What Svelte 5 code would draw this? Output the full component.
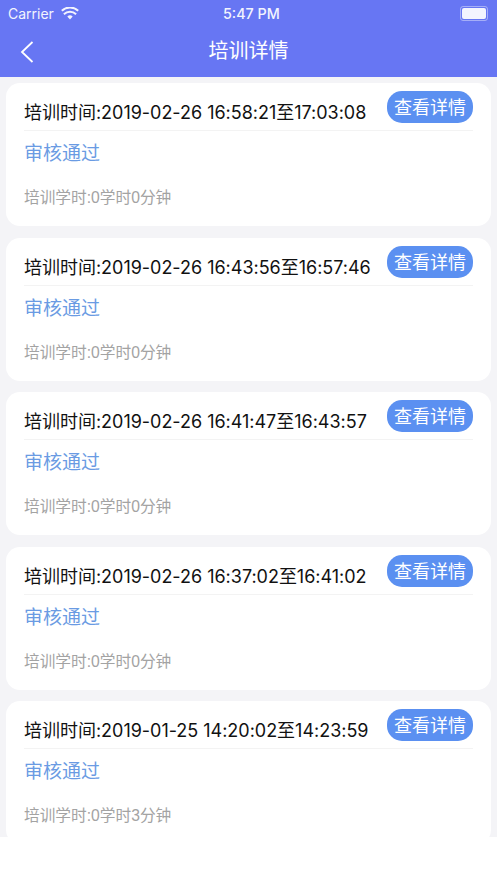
<script lang="ts">
	type Record = { range: string; hours: string };

	const records: Record[] = [
		{ range: '2019-02-26 16:58:21至17:03:08', hours: '0学时0分钟' },
		{ range: '2019-02-26 16:43:56至16:57:46', hours: '0学时0分钟' },
		{ range: '2019-02-26 16:41:47至16:43:57', hours: '0学时0分钟' },
		{ range: '2019-02-26 16:37:02至16:41:02', hours: '0学时0分钟' },
		{ range: '2019-01-25 14:20:02至14:23:59', hours: '0学时3分钟' }
	];
</script>

<div class="screen">
	<header class="top">
		<div class="status">
			<div class="status-left">
				<span>Carrier</span>
				<svg width="18" height="13" viewBox="0 0 18 13">
					<path d="M9 12.6 L6.3 9.6 A3.9 3.9 0 0 1 11.7 9.6 Z" fill="#fff" />
					<path d="M2.9 6.2 A8.8 8.8 0 0 1 15.100 6.200" fill="none" stroke="#fff" stroke-width="2" transform="translate(0 1)" />
					<path d="M0.800 3.800 A11.800 11.800 0 0 1 17.200 3.800" fill="none" stroke="#fff" stroke-width="2" />
				</svg>
			</div>
			<span class="clock">5:47 PM</span>
			<div class="battery"><i></i></div>
		</div>
		<div class="nav">
			<svg class="back" width="16" height="24" viewBox="0 0 16 24">
				<path d="M13.500 2 L3 12 L13.500 22" fill="none" stroke="#fff" stroke-width="1.800" />
			</svg>
			<h1>培训详情</h1>
		</div>
	</header>

	<main class="list">
		{#each records as item}
			<section class="card">
				<div class="head">
					<span class="range">培训时间:{item.range}</span>
					<button type="button">查看详情</button>
				</div>
				<div class="state">审核通过</div>
				<div class="hours">培训学时:{item.hours}</div>
			</section>
		{/each}
	</main>
</div>

<style>
	:global(body) {
		margin: 0;
		background: #fff;
	}

	.screen {
		width: 497px;
		height: 883px;
		overflow: hidden;
		font-family: "Liberation Sans", "Noto Sans CJK SC", sans-serif;
		background: #fff;
	}

	.top {
		height: 77px;
		background: #6776f3;
		color: #fff;
	}

	.status {
		height: 26px;
		padding: 0 8px;
		display: flex;
		align-items: center;
		justify-content: space-between;
		position: relative;
		font-family: Inter, "Liberation Sans", sans-serif;
		font-size: 14px;
		opacity: 0.92;
	}

	.status-left {
		display: flex;
		align-items: center;
		gap: 7px;
	}

	.clock {
		position: absolute;
		left: 223px;
		font-size: 14.300px;
		font-weight: 500;
	}

	.battery {
		width: 24px;
		height: 11px;
		margin-right: 1px;
		padding: 1px;
		border: 1px solid rgba(255, 255, 255, 0.45);
		border-radius: 3px;
		box-sizing: content-box;
		display: flex;
	}

	.battery i {
		flex: 1;
		background: #fff;
		border-radius: 2px;
	}

	.nav {
		height: 51px;
		position: relative;
		display: flex;
		align-items: center;
		justify-content: center;
	}

	.back {
		position: absolute;
		left: 19px;
		top: 14px;
	}

	h1 {
		margin: 0 0 4px;
		font-size: 20px;
		font-weight: 400;
	}

	.list {
		height: 760px;
		padding: 6px 6px 0;
		box-sizing: border-box;
		background: #f4f4f7;
		overflow: hidden;
		display: flex;
		flex-direction: column;
		gap: 11.600px;
	}

	.card {
		flex: none;
		height: 143px;
		padding: 0 18px;
		box-sizing: border-box;
		background: #fff;
		border-radius: 14px;
	}

	.head {
		height: 47px;
		display: flex;
		justify-content: space-between;
		border-bottom: 1px solid #f3f3f3;
	}

	.range {
		margin-top: 19px;
		font-family: Inter, "Liberation Sans", "Noto Sans CJK SC", sans-serif;
		font-size: 18px;
		line-height: 22px;
		letter-spacing: -0.020px;
		color: #111;
		white-space: nowrap;
	}

	button {
		flex: none;
		width: 86px;
		height: 32px;
		margin-top: 8px;
		padding: 0 0 2px;
		border: none;
		border-radius: 15px;
		background: #5b90f1;
		color: #fff;
		font: inherit;
		font-size: 18px;
	}

	.state {
		margin-top: 10px;
		font-size: 19px;
		line-height: 26px;
		color: #6a9be3;
	}

	.hours {
		margin-top: 21px;
		font-size: 15.700px;
		line-height: 20px;
		color: #a3a3a3;
	}
</style>
